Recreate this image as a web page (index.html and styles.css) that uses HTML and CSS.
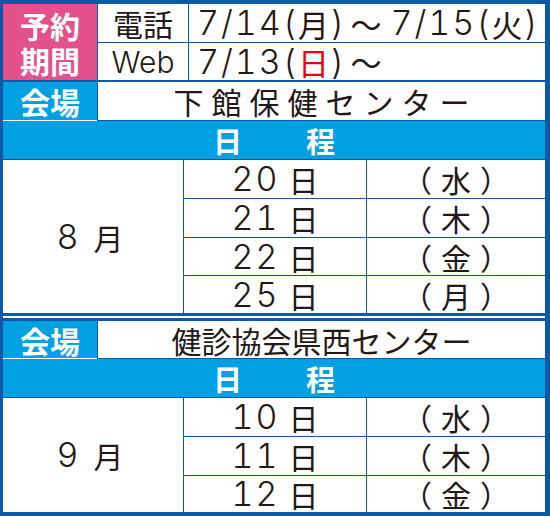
FILE: index.html
```html
<!DOCTYPE html>
<html lang="ja">
<head>
<meta charset="utf-8">
<link rel="stylesheet" href="styles.css">
</head>
<body>
<div class="frame">
  <div class="block">
    <div class="period">
      <div class="pink"><span>予約</span><span>期間</span></div>
      <div class="lbl">電話</div>
      <div class="val date"><span>7/14(</span><span class="k">月</span><span>)</span><span class="k tilde">～</span><span>7/15(</span><span class="k">火</span><span>)</span></div>
      <div class="lbl web">Web</div>
      <div class="val date"><span>7/13(</span><span class="k red">日</span><span>)</span><span class="k tilde">～</span></div>
    </div>
    <div class="venue gap2">
      <div class="vlabel">会場</div>
      <div class="vname wide">下館保健センター</div>
    </div>
    <div class="head"><span>日</span><span>程</span></div>
    <div class="days four">
      <div class="month"><span class="n">8</span><span>月</span></div>
      <div class="day"><span class="n">20</span><span>日</span></div><div class="wd">（水）</div>
      <div class="day"><span class="n">21</span><span>日</span></div><div class="wd">（木）</div>
      <div class="day"><span class="n">22</span><span>日</span></div><div class="wd">（金）</div>
      <div class="day"><span class="n">25</span><span>日</span></div><div class="wd">（月）</div>
    </div>
  </div>
  <div class="sep"></div>
  <div class="block">
    <div class="venue short">
      <div class="vlabel">会場</div>
      <div class="vname">健診協会県西センター</div>
    </div>
    <div class="head"><span>日</span><span>程</span></div>
    <div class="days three">
      <div class="month"><span class="n">9</span><span>月</span></div>
      <div class="day"><span class="n">10</span><span>日</span></div><div class="wd">（水）</div>
      <div class="day"><span class="n">11</span><span>日</span></div><div class="wd">（木）</div>
      <div class="day"><span class="n">12</span><span>日</span></div><div class="wd">（金）</div>
    </div>
  </div>
</div>
</body>
</html>
```
FILE: styles.css
```css
* { box-sizing: border-box; margin: 0; padding: 0; }
html, body { width: 550px; height: 516px; overflow: hidden; background: #0c5aa6; }
body {
  font-family: "Noto Sans CJK JP", sans-serif;
  color: #231815;
}
.frame {
  width: 550px;
  height: 516px;
  background: #0c5aa6;
  padding: 4px 5px 4px 3px;
  display: flex;
  flex-direction: column;
}
.block {
  display: flex;
  flex-direction: column;
  gap: 1px;
}
.sep {
  height: 2px;
  margin: 3px 0;
  background: #fff;
}

/* period */
.period {
  display: grid;
  grid-template-columns: 94px 90px 1fr;
  grid-template-rows: 38px 37px;
  gap: 1px;
}
.pink {
  grid-row: 1 / span 2;
  background: #e4508c;
  color: #fff;
  font-weight: 700;
  font-size: 30px;
  line-height: 1;
  display: flex;
  flex-direction: column;
  align-items: center;
  justify-content: center;
  gap: 5px;
}
.lbl {
  background: #fff;
  font-size: 30px;
  display: flex;
  align-items: center;
  justify-content: center;
  line-height: 1;
}
.lbl.web {
  font-family: "Inter", "Liberation Sans", sans-serif;
  font-weight: 300;
  font-size: 30px;
}
.val {
  background: #fff;
  display: flex;
  align-items: center;
  padding-left: 8px;
}
.date {
  font-family: "Inter", "Liberation Sans", sans-serif;
  font-weight: 300;
  font-size: 34px;
  letter-spacing: 2px;
  font-variant-numeric: tabular-nums;
  line-height: 1;
  white-space: nowrap;
}
.date .k {
  font-family: "Noto Sans CJK JP", sans-serif;
  font-weight: 400;
  font-size: 31px;
}
.date .tilde { margin: 0 7px 0 4px; }
.red { color: #e60012; }

/* venue */
.venue {
  display: grid;
  grid-template-columns: 94px 1fr;
  gap: 1px;
  height: 38px;
}
.venue.gap2 { margin-top: 1px; }
.venue.short { height: 37px; }
.vlabel {
  background: #00a0e3;
  color: #fff;
  font-weight: 700;
  font-size: 30px;
  line-height: 1;
  display: flex;
  align-items: center;
  justify-content: center;
  box-shadow: 0 1px 0 #fff;
}
.vname {
  background: #fff;
  font-size: 30px;
  line-height: 1;
  display: flex;
  align-items: center;
  justify-content: center;
  white-space: nowrap;
}
.vname.wide {
  letter-spacing: 8px;
  padding-left: 8px;
}

/* header */
.head {
  height: 38px;
  background: #00a0e3;
  color: #fff;
  font-weight: 700;
  font-size: 29px;
  line-height: 1;
  display: flex;
  align-items: center;
  justify-content: center;
  gap: 64px;
}

/* days */
.days {
  display: grid;
  grid-template-columns: 180px 182px 1fr;
  gap: 1px;
}
.days.four { grid-template-rows: 38px 38px 37px 37px; }
.days.three { grid-template-rows: 38px 38px 36px; }
.month, .day, .wd {
  background: #fff;
  display: flex;
  align-items: center;
  justify-content: center;
  font-size: 30px;
  line-height: 1;
  white-space: nowrap;
}
.month { grid-row: 1 / -1; padding-right: 6px; }
.n {
  font-family: "Inter", "Liberation Sans", sans-serif;
  font-weight: 300;
  font-size: 34px;
  letter-spacing: 2px;
  font-variant-numeric: tabular-nums;
}
.month .n { margin-right: 13px; }
.day .n { margin-right: 9px; }
.wd { letter-spacing: 9px; padding-left: 9px; }
```
